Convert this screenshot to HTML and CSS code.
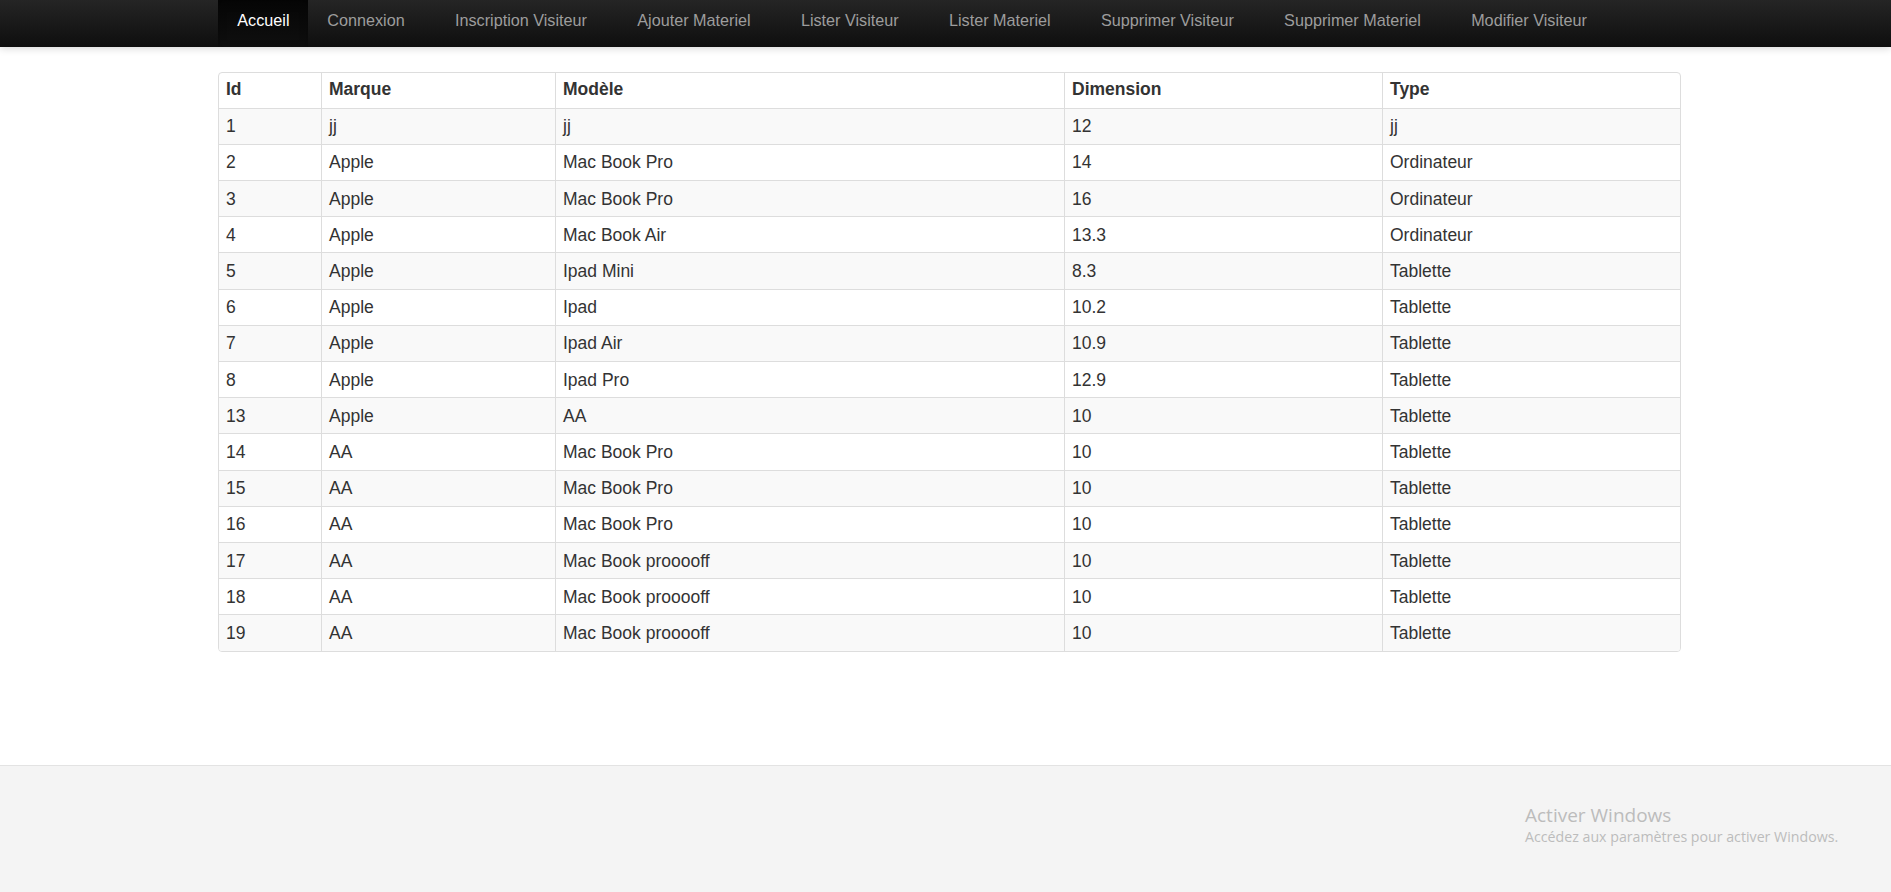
FILE: index.html
```html
<!DOCTYPE html>
<html lang="fr">
<head>
<meta charset="utf-8">
<title>Lister Materiel</title>
<link rel="stylesheet" href="styles.css">
</head>
<body>
<nav class="navbar">
  <ul class="nav container">
    <li class="active"><a href="#">Accueil</a></li>
    <li><a href="#">Connexion</a></li>
    <li><a href="#">Inscription Visiteur</a></li>
    <li><a href="#">Ajouter Materiel</a></li>
    <li><a href="#">Lister Visiteur</a></li>
    <li><a href="#">Lister Materiel</a></li>
    <li><a href="#">Supprimer Visiteur</a></li>
    <li><a href="#">Supprimer Materiel</a></li>
    <li><a href="#">Modifier Visiteur</a></li>
  </ul>
</nav>
<main class="main">
  <div class="container table-wrap">
    <table class="table">
      <thead>
        <tr><th class="c-id">Id</th><th class="c-marque">Marque</th><th class="c-modele">Modèle</th><th class="c-dim">Dimension</th><th class="c-type">Type</th></tr>
      </thead>
      <tbody>
        <tr><td>1</td><td>jj</td><td>jj</td><td>12</td><td>jj</td></tr>
        <tr><td>2</td><td>Apple</td><td>Mac Book Pro</td><td>14</td><td>Ordinateur</td></tr>
        <tr><td>3</td><td>Apple</td><td>Mac Book Pro</td><td>16</td><td>Ordinateur</td></tr>
        <tr><td>4</td><td>Apple</td><td>Mac Book Air</td><td>13.3</td><td>Ordinateur</td></tr>
        <tr><td>5</td><td>Apple</td><td>Ipad Mini</td><td>8.3</td><td>Tablette</td></tr>
        <tr><td>6</td><td>Apple</td><td>Ipad</td><td>10.2</td><td>Tablette</td></tr>
        <tr><td>7</td><td>Apple</td><td>Ipad Air</td><td>10.9</td><td>Tablette</td></tr>
        <tr><td>8</td><td>Apple</td><td>Ipad Pro</td><td>12.9</td><td>Tablette</td></tr>
        <tr><td>13</td><td>Apple</td><td>AA</td><td>10</td><td>Tablette</td></tr>
        <tr><td>14</td><td>AA</td><td>Mac Book Pro</td><td>10</td><td>Tablette</td></tr>
        <tr><td>15</td><td>AA</td><td>Mac Book Pro</td><td>10</td><td>Tablette</td></tr>
        <tr><td>16</td><td>AA</td><td>Mac Book Pro</td><td>10</td><td>Tablette</td></tr>
        <tr><td>17</td><td>AA</td><td>Mac Book prooooff</td><td>10</td><td>Tablette</td></tr>
        <tr><td>18</td><td>AA</td><td>Mac Book prooooff</td><td>10</td><td>Tablette</td></tr>
        <tr><td>19</td><td>AA</td><td>Mac Book prooooff</td><td>10</td><td>Tablette</td></tr>
      </tbody>
    </table>
  </div>
</main>
<footer class="footer"></footer>
<div class="activate">
  <div class="activate-title">Activer Windows</div>
  <div class="activate-sub">Accédez aux paramètres pour activer Windows.</div>
</div>
</body>
</html>
```

FILE: styles.css
```css
* { box-sizing: border-box; }

html, body {
  margin: 0;
  padding: 0;
  height: 100%;
}

body {
  min-height: 892px;
  display: flex;
  flex-direction: column;
  font-family: "Liberation Sans", Arial, Helvetica, sans-serif;
  color: #333;
  background: #fff;
  overflow: hidden;
}

.container {
  width: 1463px;
  margin-left: 218px;
}

/* Navbar */
.navbar {
  height: 47px;
  background: linear-gradient(to bottom, #252525 0%, #0e0e0e 100%);
  box-shadow: 0 1px 8px rgba(0, 0, 0, 0.18);
  position: relative;
  z-index: 2;
  flex: none;
}

.nav {
  list-style: none;
  padding: 0;
  margin-top: 0;
  margin-bottom: 0;
  display: flex;
  height: 47px;
}

.nav li {
  height: 47px;
}

.nav li + li {
  margin-right: 12.5px;
}

.nav a {
  display: block;
  height: 47px;
  padding: 0 18.5px 0 19.3px;
  line-height: 41px;
  font-size: 16.2px;
  color: #9d9d9d;
  text-decoration: none;
  white-space: nowrap;
}

.nav li.active a {
  color: #fff;
  background: linear-gradient(to bottom, #060606 0%, #0f0f0f 100%);
  box-shadow: inset 0 3px 9px rgba(0, 0, 0, 0.25);
}

/* Main */
.main {
  flex: 1;
  padding-top: 24.5px;
}

.table-wrap {
  border: 1px solid #ddd;
  border-radius: 4px;
  overflow: hidden;
}

.table {
  width: 100%;
  border-collapse: separate;
  border-spacing: 0;
  table-layout: fixed;
  font-size: 17.5px;
}

.table th,
.table td {
  padding: 0 7px;
  line-height: 20px;
  text-align: left;
  vertical-align: middle;
  border-left: 1px solid #ddd;
  border-top: 1px solid #ddd;
  white-space: nowrap;
  color: #333;
}

.table th {
  height: 35.2px;
  padding-bottom: 2px;
  font-weight: bold;
  border-top: 0;
}

.table tr > :first-child {
  border-left: 0;
}

.table tbody td {
  height: 36.2px;
}

.table tbody tr:nth-child(odd) td {
  background: #f9f9f9;
}

.c-id { width: 102px; }
.c-marque { width: 234px; }
.c-modele { width: 509px; }
.c-dim { width: 318px; }
.c-type { width: 298px; }

/* Footer */
.footer {
  flex: none;
  height: 127px;
  background: #f4f4f4;
  border-top: 1px solid #e3e3e3;
}

/* Windows activation watermark */
.activate {
  position: absolute;
  left: 1525px;
  top: 803px;
  font-family: "Open Sans", "Noto Sans", sans-serif;
  color: #bcbcbc;
  pointer-events: none;
}

.activate-title {
  font-size: 19px;
  line-height: 24px;
}

.activate-sub {
  font-size: 14.2px;
  line-height: 19px;
}
```
